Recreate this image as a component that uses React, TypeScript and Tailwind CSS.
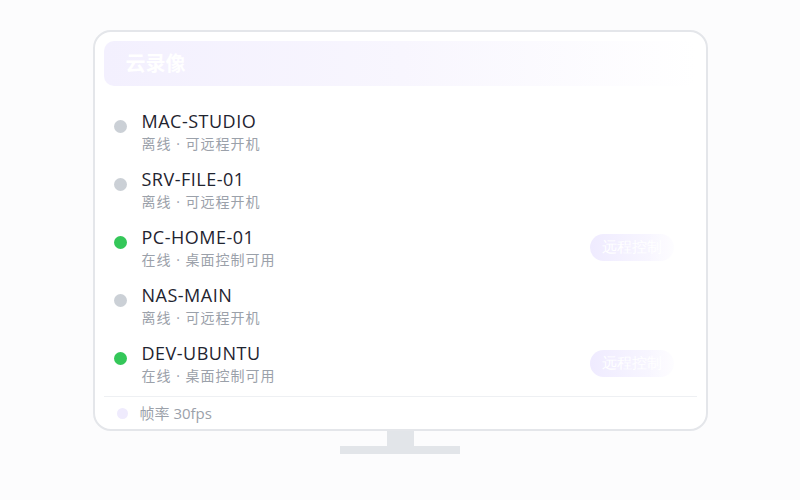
import React from 'react';

type Device = {
  name: string;
  online: boolean;
};

const devices: Device[] = [
  { name: 'MAC-STUDIO', online: false },
  { name: 'SRV-FILE-01', online: false },
  { name: 'PC-HOME-01', online: true },
  { name: 'NAS-MAIN', online: false },
  { name: 'DEV-UBUNTU', online: true },
];

const DeviceRow = ({ device }: { device: Device }) => (
  <div className="flex h-[43px] items-center">
    <div className="flex h-full flex-1 items-start">
      <span
        className={
          device.online
            ? 'mt-[10px] h-[13px] w-[13px] shrink-0 rounded-full bg-[#34c759]'
            : 'mt-[10px] h-[13px] w-[13px] shrink-0 rounded-full bg-[#cbd0d6]'
        }
      />
      <div className="ml-[15px] flex flex-col">
        <span className="text-[18px] leading-[22px] tracking-[0.5px] text-[#1f2430]">{device.name}</span>
        <span className="mt-[3px] text-[14px] leading-[18px] tracking-[1px] text-[#9ba1aa]">
          {device.online ? '在线 · 桌面控制可用' : '离线 · 可远程开机'}
        </span>
      </div>
    </div>
    {device.online && (
      <button className="mr-[13px] flex h-[27px] w-[84px] items-center rounded-full bg-gradient-to-r from-[#efebff] to-[#fbfaff] pl-[12px] text-[15px] text-white [font-family:'Liberation_Serif',serif]">
        远程控制
      </button>
    )}
  </div>
);

export default function App() {
  return (
    <div className="flex h-[500px] w-full flex-col items-center bg-[#fcfcfd] pt-[30px] [font-family:'Open_Sans','Noto_Sans_CJK_SC',sans-serif]">
      <div className="relative flex h-[401px] w-[615px] flex-col rounded-[18px] border-2 border-[#e4e6ea] bg-white px-[9px] pt-[9px]">
        <div className="flex h-[45px] shrink-0 items-center rounded-[10px] bg-gradient-to-r from-[#f3f0fe] via-[#f8f6fe] to-white px-[22px]">
          <span className="text-[20px] font-bold text-white">云录像</span>
        </div>

        <div className="flex flex-col gap-[15px] px-[10px] pt-[24px]">
          {devices.map((d) => (
            <DeviceRow key={d.name} device={d} />
          ))}
        </div>

        <div className="mt-[11px] h-px bg-[#eef0f3]" />
        <div className="flex h-[32px] items-center pl-[13px]">
          <span className="h-[11px] w-[11px] rounded-full bg-[#efebfd]" />
          <span className="ml-[12px] text-[15px] text-[#9ba1aa]">帧率 30fps</span>
        </div>

        {/* fade on the right edge */}
        <div className="pointer-events-none absolute bottom-[40px] right-[9px] top-[100px] w-[50px] bg-gradient-to-r from-transparent to-white" />
      </div>

      <div className="h-[15px] w-[27px] bg-[#e2e5e9]" />
      <div className="h-[8px] w-[120px] bg-[#e2e5e9]" />
    </div>
  );
}
